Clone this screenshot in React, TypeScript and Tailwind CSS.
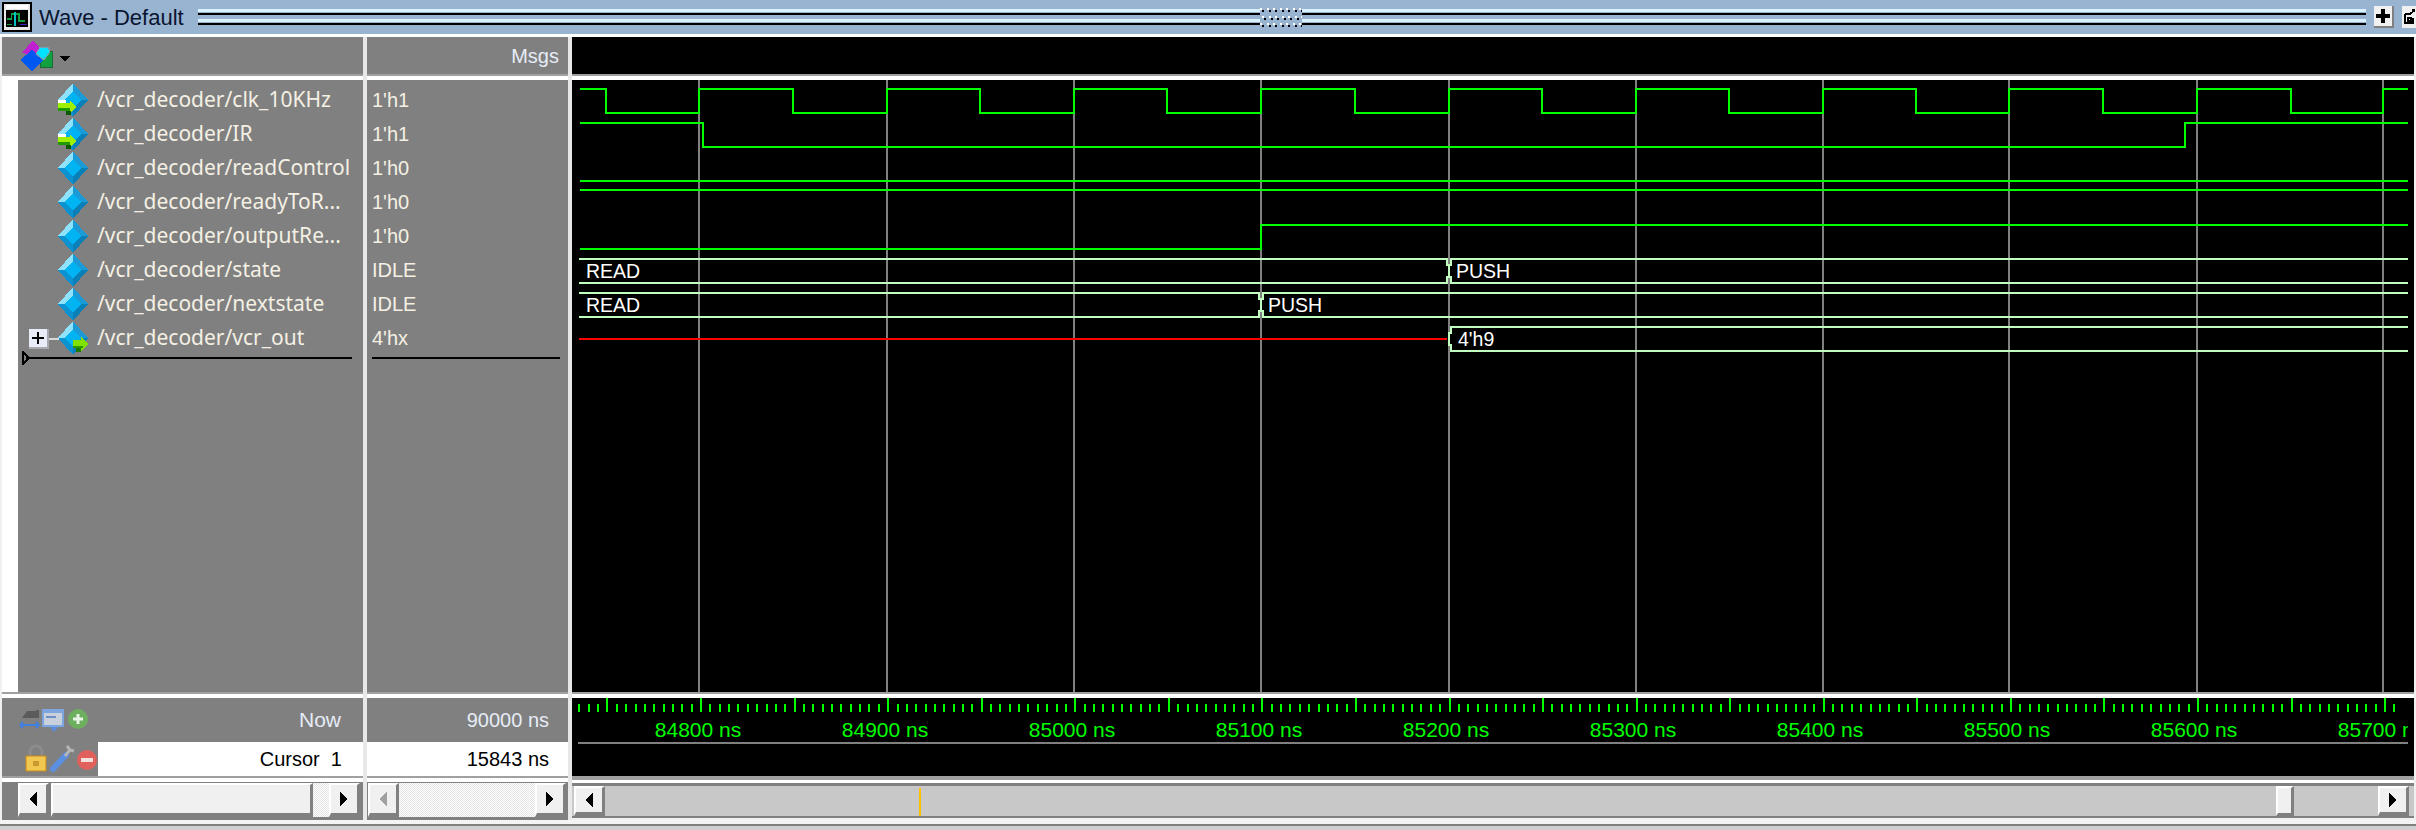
const font = "font-['Liberation_Sans',Arial,sans-serif]";

const signals = [
  { name: "/vcr_decoder/clk_10KHz", value: "1'h1", arrow: "in" },
  { name: "/vcr_decoder/IR", value: "1'h1", arrow: "in" },
  { name: "/vcr_decoder/readControl", value: "1'h0" },
  { name: "/vcr_decoder/readyToR...", value: "1'h0" },
  { name: "/vcr_decoder/outputRe...", value: "1'h0" },
  { name: "/vcr_decoder/state", value: "IDLE" },
  { name: "/vcr_decoder/nextstate", value: "IDLE" },
  { name: "/vcr_decoder/vcr_out", value: "4'hx", arrow: "out", expand: true },
];

const GREEN = "#00ff00";
const BUS = "#c0ffc0";
const END = 2408;
const rises = [699, 887, 1074, 1261, 1449, 1636, 1823, 2009, 2197, 2383];
const falls = [606, 793, 980, 1167, 1355, 1542, 1729, 1916, 2103, 2291];
const labels = [84800, 84900, 85000, 85100, 85200, 85300, 85400, 85500, 85600, 85700];

function clockPath() {
  let d = "M580 89 H" + falls[0];
  for (let i = 0; i < rises.length; i++) {
    d += ` V113 H${rises[i]} V89 H${i + 1 < falls.length ? falls[i + 1] : END}`;
  }
  return d;
}

// one bus signal: two rails with a narrow crossing at x
function Bus({ x, top, from = 579 }: { x: number; top: number; from?: number }) {
  const b = top + 24;
  return (
    <g fill="none" stroke={BUS} strokeWidth="2">
      <path d={`M${from} ${top} H${x - 2} V${top + 6} H${x} V${b - 6} H${x - 2} V${b} H${from}`} />
      <path d={`M${END} ${top} H${x + 2} V${top + 6} H${x} M${x} ${b - 6} H${x + 2} V${b} H${END}`} />
    </g>
  );
}

function Waves() {
  return (
    <svg viewBox="572 80 1842 612" className="block w-full h-full" shapeRendering="crispEdges">
      {rises.map((x) => (
        <rect key={x} x={x - 1} y="80" width="2" height="612" fill="#808080" />
      ))}
      <g fill="none" stroke={GREEN} strokeWidth="2">
        <path d={clockPath()} />
        <path d={`M580 123 H703 V147 H2185 V123 H${END}`} />
        <path d={`M580 181 H${END}`} />
        <path d={`M580 190 H${END}`} />
        <path d={`M580 249 H1261 V225 H${END}`} />
      </g>
      <Bus x={1449} top={259} />
      <Bus x={1261} top={293} />
      <path d="M579 339 H1447" stroke="#ff0000" strokeWidth="2" />
      <path
        d={`M${END} 327 H1451 V333 H1449 V345 H1451 V351 H${END}`}
        fill="none"
        stroke={BUS}
        strokeWidth="2"
      />
      <g fill="#ffffff" fontSize="19.5" fontFamily="Liberation Sans, Arial, sans-serif">
        <text x="586" y="278">READ</text>
        <text x="1456" y="278">PUSH</text>
        <text x="586" y="312">READ</text>
        <text x="1268" y="312">PUSH</text>
        <text x="1458" y="346">4'h9</text>
      </g>
    </svg>
  );
}

function Ruler() {
  const ticks = [];
  for (let i = 0; i < 195; i++) {
    const x = Math.round(578.4 + i * 9.356);
    if (x > 2404) break;
    const major = i % 10 === 3;
    ticks.push(<rect key={i} x={x} y={major ? 698 : 704} width="2" height={major ? 14 : 8} fill={GREEN} />);
  }
  return (
    <svg viewBox="572 698 1842 78" className="block w-full h-full">
      <g shapeRendering="crispEdges">{ticks}</g>
      <rect x="578" y="742" width="1830" height="2" fill="#808080" shapeRendering="crispEdges" />
      <g fill={GREEN} fontSize="21" fontFamily="Liberation Sans, Arial, sans-serif">
        {labels.map((t, i) => (
          <text key={t} x={Math.round(698 + i * 187)} y="737" textAnchor="middle">
            {t} ns
          </text>
        ))}
      </g>
      <rect x="2408" y="698" width="6" height="78" fill="#000000" />
    </svg>
  );
}

function Diamond({ arrow }: { arrow?: string }) {
  return (
    <svg width="30" height="34" viewBox="0 0 30 34" shapeRendering="crispEdges" className="shrink-0">
      <polygon points="15,0 30,17 15,34 0,17" fill="#0b7fb8" />
      <polygon points="15,0 0,17 7,17 15,8" fill="#8fe2fb" />
      <polygon points="15,0 30,17 23,17 15,8" fill="#1a9ad6" />
      <polygon points="15,8 23,17 15,26 7,17" fill="#00b4f4" />
      <polygon points="0,17 7,17 15,26 15,34" fill="#0a93d0" />
      {arrow === "in" && (
        <g>
          <rect x="0" y="17" width="8" height="3" fill="#ffffff" />
          <polygon points="0,20 12,20 12,17 18,24 12,31 12,28 0,28" fill="#9cf000" />
          <rect x="0" y="25" width="12" height="3" fill="#1f9a00" />
          <rect x="8" y="28" width="5" height="4" fill="#0f5a00" />
        </g>
      )}
      {arrow === "out" && (
        <g>
          <polygon points="15,19 23,19 23,15 30,23 23,31 23,27 15,27" fill="#80e000" />
          <rect x="15" y="25" width="10" height="2" fill="#2a9a00" />
          <rect x="18" y="27" width="5" height="4" fill="#1a7a00" />
        </g>
      )}
    </svg>
  );
}

function HeaderIcon() {
  return (
    <svg width="50" height="32" viewBox="0 0 50 32" shapeRendering="crispEdges">
      <polygon points="13,0 21,9 12,15 2,13" fill="#c020d0" />
      <rect x="20" y="11" width="12" height="16" fill="#10a040" stroke="#1a6a3a" />
      <polygon points="12,10 24,20 12,31 0,20" fill="#0058f0" />
      <polygon points="20,7 28,7 30,12 24,20 16,14" fill="#00e0ff" stroke="#7aa0b0" />
      <polygon points="40,16 50,16 45,22" fill="#000000" />
    </svg>
  );
}

function BottomIcons() {
  return (
    <svg width="72" height="24" viewBox="0 0 72 24" className="shrink-0">
      <path d="M4 10 L9 3 h8 l2 -1 h2 v8 z" fill="#4c4c4c" opacity="0.7" />
      <path d="M2 17 H21 M2 17 l3 -3 M2 17 l3 3 M21 17 l-3 -3 M21 17 l-3 3" stroke="#3f7fe0" strokeWidth="2" fill="none" />
      <rect x="24" y="1" width="22" height="18" fill="#7da6e0" />
      <rect x="26" y="5" width="18" height="12" fill="#c8d0dc" />
      <rect x="28" y="8" width="10" height="2" fill="#6b8fc4" />
      <path d="M32 19 h8 l-4 5 z" fill="#5c8ddc" />
      <circle cx="60" cy="11" r="10" fill="#6dae5f" />
      <path d="M60 6 V16 M55 11 H65" stroke="#eaf5e8" strokeWidth="3" />
    </svg>
  );
}

function CursorIcons() {
  return (
    <svg width="72" height="30" viewBox="0 0 72 30" className="shrink-0">
      <path d="M5 13 V8 a6 6 0 0 1 12 0 V13" fill="none" stroke="#8c8c8c" strokeWidth="3" />
      <rect x="1" y="12" width="20" height="15" fill="#f0c850" stroke="#c88a20" />
      <rect x="8" y="17" width="6" height="5" fill="#c89a30" />
      <path d="M28 25 L41 11" stroke="#5b8fe0" strokeWidth="6" strokeLinecap="round" />
      <path d="M40 12 L45 6 L42 2 M45 6 L49 7" stroke="#b4b4b4" strokeWidth="3" fill="none" />
      <circle cx="62" cy="16" r="10" fill="#e0605c" />
      <rect x="56" y="14" width="12" height="4" fill="#f4e0dc" />
    </svg>
  );
}

function ArrowBtn({ dir, disabled }: { dir: "l" | "r"; disabled?: boolean }) {
  return (
    <div className="w-[31px] h-full shrink-0 bg-[#f0f0f0] border-t-2 border-l-2 border-t-white border-l-white border-b-4 border-r-3 border-b-[#808080] border-r-[#808080] flex items-center justify-center">
      <svg width="8" height="14" viewBox="0 0 8 14" shapeRendering="crispEdges">
        <polygon points={dir === "l" ? "8,0 8,14 0,7" : "0,0 0,14 8,7"} fill={disabled ? "#a0a0a0" : "#000000"} />
      </svg>
    </div>
  );
}

function Sep() {
  return <div className="w-[4px] shrink-0 bg-[#e8e8e8]" />;
}

function HRule() {
  return (
    <div className="shrink-0">
      <div className="h-[2px] bg-[#a0a0a0]" />
      <div className="h-[4px] bg-white" />
    </div>
  );
}

function Grip({ className }: { className: string }) {
  return (
    <div className={`${className} flex flex-col`}>
      <div className="h-[3px] bg-[#d8f0ff]" />
      <div className="h-[1px]" />
      <div className="h-[2px] bg-black" />
      <div className="h-[4px]" />
      <div className="h-[3px] bg-[#d8f0ff]" />
      <div className="h-[1px]" />
      <div className="h-[2px] bg-black" />
    </div>
  );
}

export default function App() {
  return (
    <div className={`w-[2416px] h-[830px] overflow-hidden bg-[#f0f0f0] flex flex-col ${font}`}>
      {/* title bar */}
      <div className="h-[34px] shrink-0 bg-[#99b4d1] flex items-center relative">
        <div className="w-[30px] h-[30px] ml-[2px] border-2 border-black bg-[#e8e8e8] shrink-0 flex flex-col">
          <div className="h-[4px] mx-[2px] mt-[1px] bg-white" />
          <svg viewBox="0 0 24 17" className="block w-[22px] h-[17px] mx-auto mt-[1px] bg-black" shapeRendering="crispEdges">
            <path d="M1 9 H6 V4 H14 V11 H21" stroke="#10a040" strokeWidth="2" fill="none" />
            <path d="M10 1 V17" stroke="#00c0c0" strokeWidth="2" />
            <path d="M15 15 H23" stroke="#4020c0" strokeWidth="2" />
            <path d="M1 15 H7" stroke="#10a040" strokeWidth="2" />
          </svg>
        </div>
        <span className="ml-[7px] text-[22px] text-[#0a1530] whitespace-nowrap w-[159px]">Wave - Default</span>
        <div className="flex-1 flex items-center mr-[8px]">
          <Grip className="w-[1062px]" />
          <svg width="42" height="24" viewBox="0 0 42 24" className="shrink-0" shapeRendering="crispEdges">
            {[0, 1, 2, 3, 4, 5, 6].map((i) => (
              <g key={i}>
                <rect x={i * 6.5} y="3" width="2" height="2" fill="#ffffff" />
                <rect x={2 + i * 6.5} y="5" width="2" height="2" fill="#000000" />
                <rect x={2 + i * 6.5} y="11" width="2" height="2" fill="#ffffff" />
                <rect x={4 + i * 6.5} y="13" width="2" height="2" fill="#000000" />
                <rect x={i * 6.5} y="18" width="2" height="2" fill="#ffffff" />
                <rect x={2 + i * 6.5} y="20" width="2" height="2" fill="#000000" />
              </g>
            ))}
          </svg>
          <Grip className="flex-1" />
        </div>
        <div className="w-[20px] h-[22px] bg-[#f0f0f0] border-r-2 border-b-2 border-[#808080] flex items-center justify-center mr-[8px] shrink-0">
          <svg width="14" height="14" viewBox="0 0 14 14" shapeRendering="crispEdges">
            <path d="M5 0 h4 v5 h5 v4 h-5 v5 h-4 v-5 h-5 v-4 h5 z" fill="#000000" />
          </svg>
        </div>
        <div className="w-[14px] h-[22px] bg-[#f0f0f0] shrink-0 flex items-center justify-start pl-[2px]">
          <svg width="12" height="16" viewBox="0 0 12 16" shapeRendering="crispEdges">
            <path d="M1 5 H7 M1 5 V14 H9 V9 M4 9 h3 v3 h-3 z M6 5 L11 1 M8 1 H11" stroke="#000000" strokeWidth="2" fill="none" />
          </svg>
        </div>
      </div>
      <div className="h-[3px] shrink-0 bg-white" />

      {/* panes */}
      <div className="flex h-[783px] shrink-0 bg-[#f0f0f0]">
        {/* names */}
        <div className="w-[361px] shrink-0 ml-[2px] flex flex-col">
          <div className="h-[37px] shrink-0 bg-[#808080] pl-[18px] pt-[3px]">
            <HeaderIcon />
          </div>
          <HRule />
          <div className="h-[612px] shrink-0 flex">
            <div className="w-[16px] bg-white shrink-0" />
            <div className="flex-1 bg-[#808080] pt-[3px] relative">
              {signals.map((s) => (
                <div key={s.name} className="h-[34px] flex items-center pl-[40px] font-['Noto_Sans',sans-serif] text-[21px] text-[#f4f0e4] whitespace-nowrap">
                  <Diamond arrow={s.arrow} />
                  <span className="ml-[9px]">{s.name}</span>
                  {s.expand && (
                    <>
                      <div className="absolute left-[31px] top-[258px] w-[10px] h-[2px] bg-[#d8d8d8]" />
                      <div className="absolute left-[11px] top-[249px] w-[20px] h-[20px] bg-[#e8ecf8] border-r-2 border-b-2 border-[#a8a8b0] flex items-center justify-center">
                        <svg width="12" height="12" viewBox="0 0 12 12" shapeRendering="crispEdges">
                          <path d="M5 0 h2 v5 h5 v2 h-5 v5 h-2 v-5 h-5 v-2 h5 z" fill="#000000" />
                        </svg>
                      </div>
                    </>
                  )}
                </div>
              ))}
              <div className="absolute left-[8px] top-[277px] w-[326px] h-[2px] bg-black" />
              <svg width="8" height="14" viewBox="0 0 8 14" className="absolute left-[4px] top-[271px]" shapeRendering="crispEdges">
                <path d="M1 1 L7 7 L1 13 z" fill="none" stroke="#000000" strokeWidth="2" />
              </svg>
            </div>
          </div>
          <HRule />
          <div className="h-[44px] shrink-0 bg-[#808080] flex items-center pl-[16px] pr-[22px] justify-between">
            <BottomIcons />
            <span className="text-[21px] text-[#e6ecf6]">Now</span>
          </div>
          <div className="h-[34px] shrink-0 bg-[#808080] flex items-stretch pl-[23px]">
            <div className="flex items-center w-[73px] shrink-0">
              <CursorIcons />
            </div>
            <div className="flex-1 bg-white text-black text-[20px] flex items-center justify-end pr-[21px] whitespace-pre">
              Cursor  1
            </div>
          </div>
          <div className="h-[2px] shrink-0 bg-[#a0a0a0]" />
          <div className="h-[4px] shrink-0 bg-white" />
          <div className="h-[38px] shrink-0 bg-[#808080] flex pl-[16px] pr-[3px] pt-[1px] pb-[3px]">
            <ArrowBtn dir="l" />
            <div className="w-[262px] ml-[2px] shrink-0 bg-[#f0f0f0] border-t-2 border-l-2 border-white border-r-3 border-b-4 border-r-[#808080] border-b-[#808080]" />
            <div className="flex-1 bg-[repeating-conic-gradient(#ffffff_0_25%,#e4e4e4_0_50%)] bg-[length:2px_2px]" />
            <ArrowBtn dir="r" />
          </div>
        </div>
        <Sep />

        {/* values */}
        <div className="w-[201px] shrink-0 flex flex-col">
          <div className="h-[37px] shrink-0 bg-[#808080] flex items-center justify-end pr-[9px] text-[20px] text-[#e6ecf6]">
            Msgs
          </div>
          <HRule />
          <div className="h-[612px] shrink-0 bg-[#808080] pt-[3px] relative">
            {signals.map((s) => (
              <div key={s.name} className="h-[34px] flex items-center pl-[5px] text-[20px] text-[#f4f0e4]">
                {s.value}
              </div>
            ))}
            <div className="absolute left-[5px] right-[8px] top-[277px] h-[2px] bg-black" />
          </div>
          <HRule />
          <div className="h-[44px] shrink-0 bg-[#808080] flex items-center justify-end pr-[19px] text-[20px] text-[#e6ecf6]">
            90000 ns
          </div>
          <div className="h-[34px] shrink-0 bg-white flex items-center justify-end pr-[19px] text-[20px] text-black">
            15843 ns
          </div>
          <div className="h-[2px] shrink-0 bg-[#a0a0a0]" />
          <div className="h-[4px] shrink-0 bg-white" />
          <div className="h-[38px] shrink-0 bg-[#808080] flex pl-[1px] pr-[2px] pt-[1px] pb-[3px]">
            <ArrowBtn dir="l" disabled />
            <div className="flex-1 bg-[repeating-conic-gradient(#ffffff_0_25%,#e4e4e4_0_50%)] bg-[length:2px_2px]" />
            <ArrowBtn dir="r" />
          </div>
        </div>
        <Sep />

        {/* wave canvas */}
        <div className="flex-1 flex flex-col mr-[2px] min-w-0">
          <div className="h-[37px] shrink-0 bg-black" />
          <HRule />
          <div className="h-[612px] shrink-0 bg-black">
            <Waves />
          </div>
          <HRule />
          <div className="h-[78px] shrink-0 bg-black">
            <Ruler />
          </div>
          <div className="h-[4px] shrink-0 bg-[#a0a0a0]" />
          <div className="h-[3px] shrink-0 bg-white" />
          <div className="h-[3px] shrink-0 bg-[#808080]" />
          <div className="h-[30px] shrink-0 bg-[#c8c8c8] flex relative pl-[2px] pr-[5px]">
            <ArrowBtn dir="l" />
            <div className="absolute left-[347px] top-[2px] w-[2px] h-[28px] bg-[#ffc000]" />
            <div className="flex-1 relative">
              <div className="absolute left-[1671px] top-0 w-[18px] h-full bg-[#f0f0f0] border-t-2 border-l-2 border-white border-b-3 border-r-3 border-r-[#808080] border-b-[#808080]" />
            </div>
            <ArrowBtn dir="r" />
          </div>
          <div className="h-[2px] shrink-0 bg-[#808080]" />
        </div>
      </div>
      <div className="h-[4px] shrink-0 bg-[#f4f4f4]" />
      <div className="h-[2px] shrink-0 bg-[#808080]" />
      <div className="flex-1 bg-[#d0d0d0]" />
    </div>
  );
}
